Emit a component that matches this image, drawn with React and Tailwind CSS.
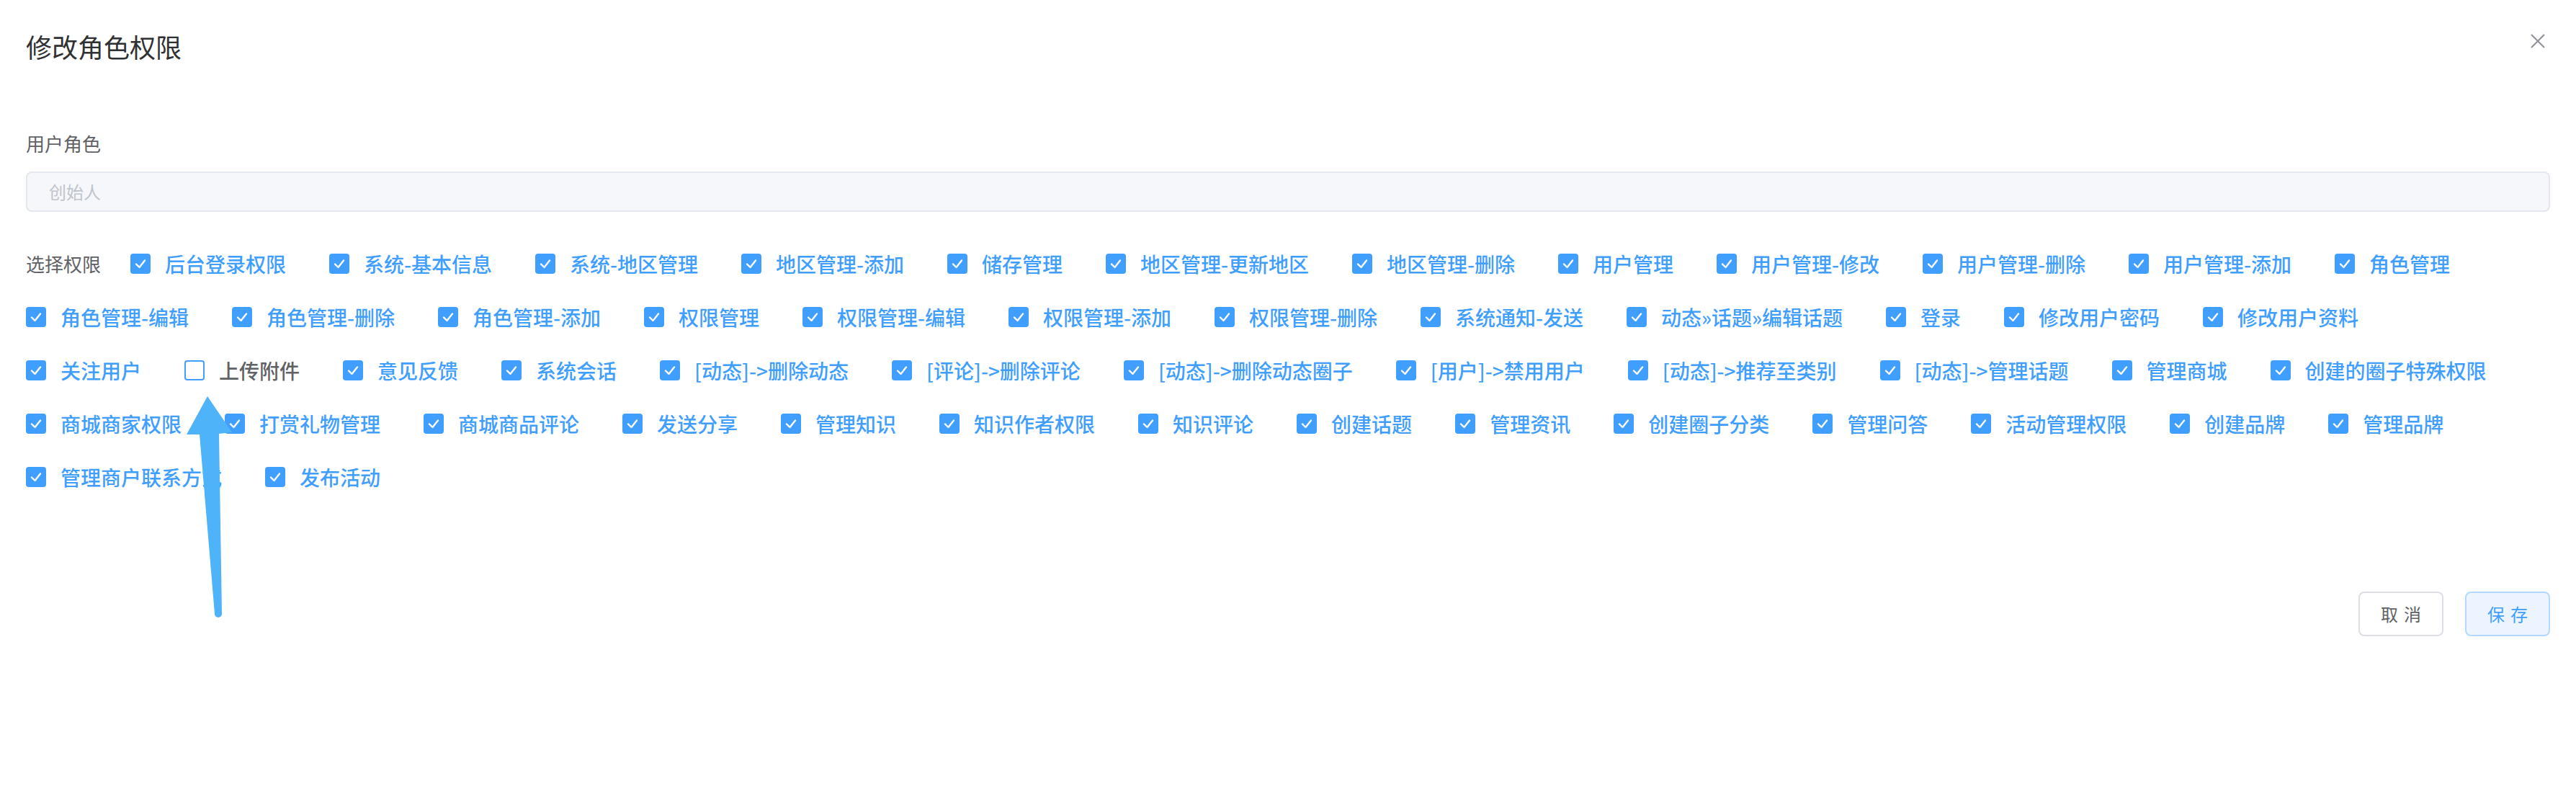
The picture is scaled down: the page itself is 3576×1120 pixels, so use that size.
import React from "react";

const rows = [
  ["后台登录权限", "系统-基本信息", "系统-地区管理", "地区管理-添加", "储存管理", "地区管理-更新地区", "地区管理-删除", "用户管理", "用户管理-修改", "用户管理-删除", "用户管理-添加", "角色管理"],
  ["角色管理-编辑", "角色管理-删除", "角色管理-添加", "权限管理", "权限管理-编辑", "权限管理-添加", "权限管理-删除", "系统通知-发送", "动态»话题»编辑话题", "登录", "修改用户密码", "修改用户资料"],
  ["关注用户", "上传附件", "意见反馈", "系统会话", "[动态]->删除动态", "[评论]->删除评论", "[动态]->删除动态圈子", "[用户]->禁用用户", "[动态]->推荐至类别", "[动态]->管理话题", "管理商城", "创建的圈子特殊权限"],
  ["商城商家权限", "打赏礼物管理", "商城商品评论", "发送分享", "管理知识", "知识作者权限", "知识评论", "创建话题", "管理资讯", "创建圈子分类", "管理问答", "活动管理权限", "创建品牌", "管理品牌"],
  ["管理商户联系方式", "发布活动"],
];

function Check({ label }) {
  const checked = label !== "上传附件";
  return (
    <label className="flex items-center h-[28px] mr-[60px] shrink-0 whitespace-nowrap">
      {checked ? (
        <span className="w-[28px] h-[28px] rounded-[4px] bg-[#409eff] flex items-center justify-center">
          <svg width="28" height="28" viewBox="0 0 28 28">
            <polyline points="8,14.5 12.5,19 20,9.5" fill="none" stroke="#fff" strokeWidth="2.4" strokeLinecap="round" strokeLinejoin="round" />
          </svg>
        </span>
      ) : (
        <span className="w-[28px] h-[28px] rounded-[4px] bg-white border-2 border-[#409eff]" />
      )}
      <span className={"ml-[20px] text-[28px] leading-[28px] font-medium " + (checked ? "text-[#409eff]" : "text-[#606266]")}>
        {label}
      </span>
    </label>
  );
}

export default function App() {
  return (
    <div className="relative w-[3576px] h-[1120px] bg-white font-['Noto_Sans_CJK_SC','Noto_Sans',sans-serif] overflow-hidden">
      <div className="flex justify-between items-start px-[36px] pt-[44px]">
        <div className="text-[36px] leading-[40px] text-[#303133]">修改角色权限</div>
        <button className="mt-[3px] mr-[7px] w-[20px] h-[20px] flex items-center justify-center">
          <svg width="20" height="20" viewBox="0 0 20 20">
            <path d="M1 1 L19 19 M19 1 L1 19" stroke="#909399" strokeWidth="2.2" fill="none" />
          </svg>
        </button>
      </div>

      <div className="px-[36px]">
        <div className="mt-[97px] text-[26px] leading-[36px] text-[#606266]">用户角色</div>
        <div className="mt-[21px] h-[56px] rounded-[8px] border-2 border-[#e4e7ed] bg-[#f5f7fa] flex items-center pl-[30px] text-[24px] text-[#c0c4cc]">
          创始人
        </div>

        <div className="mt-[58px] flex flex-col gap-[46px]">
          {rows.map((row, i) => (
            <div key={i} className="flex items-center">
              {i === 0 && (
                <span className="text-[26px] leading-[28px] text-[#606266] mr-[41px] whitespace-nowrap">选择权限</span>
              )}
              {row.map((l) => (
                <Check key={l} label={l} />
              ))}
            </div>
          ))}
        </div>

        <div className="mt-[145px] flex justify-end gap-[30px]">
          <button className="w-[118px] h-[62px] rounded-[8px] border-2 border-[#dcdfe6] bg-white text-[24px] text-[#606266] flex items-center justify-center gap-[8px]">
            <span>取</span>
            <span>消</span>
          </button>
          <button className="w-[118px] h-[62px] rounded-[8px] border-2 border-[#b3d8ff] bg-[#ecf5ff] text-[24px] text-[#409eff] flex items-center justify-center gap-[8px]">
            <span>保</span>
            <span>存</span>
          </button>
        </div>
      </div>

      <svg className="absolute left-[250px] top-[540px] pointer-events-none" width="80" height="320" viewBox="0 0 80 320">
        <path
          d="M38 10 L9 63 L27 63 L48 312 A5 5 0 0 0 58 312 L54 62 L72 60 Z"
          fill="#4fb3f9"
        />
      </svg>
    </div>
  );
}
